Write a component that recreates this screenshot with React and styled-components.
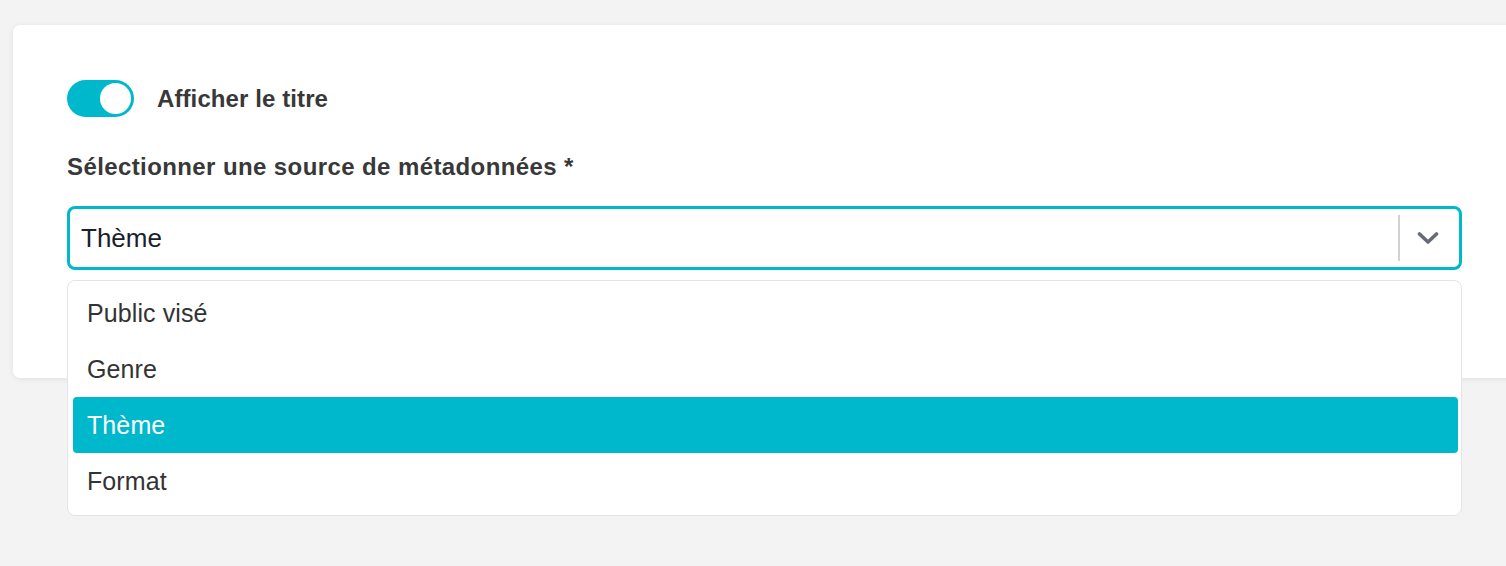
import { useState } from 'react';
import styled, { createGlobalStyle } from 'styled-components';

const GlobalStyle = createGlobalStyle`
  html, body {
    margin: 0;
    padding: 0;
    background-color: #f3f3f3;
    overflow: hidden;
  }

  body {
    font-family: 'Liberation Sans', Arial, Helvetica, sans-serif;
    color: #333;
  }
`;

const Page = styled.div`
  padding: 25px 0 0 13px;
  min-height: 100vh;
  box-sizing: border-box;
`;

const Card = styled.div`
  position: relative;
  width: 1503px;
  box-sizing: border-box;
  padding: 55px 54px 108px 54px;
  background-color: #fff;
  border-radius: 7px;
  box-shadow: 0 1px 6px rgba(0, 0, 0, 0.08);
`;

const ToggleRow = styled.label`
  display: flex;
  align-items: center;
  gap: 23px;
  cursor: pointer;
`;

const Track = styled.span`
  position: relative;
  display: inline-block;
  width: 67px;
  height: 37px;
  border-radius: 19px;
  background-color: ${({ $on }) => ($on ? '#00b8cc' : '#ccc')};
  transition: background-color 0.2s ease;
`;

const Knob = styled.span`
  position: absolute;
  top: 3px;
  left: ${({ $on }) => ($on ? '33px' : '3px')};
  width: 31px;
  height: 31px;
  border-radius: 50%;
  background-color: #fff;
  transition: left 0.2s ease;
`;

const ToggleText = styled.span`
  font-size: 24px;
  font-weight: 700;
  letter-spacing: 0.1px;
  color: #383838;
`;

const FieldLabel = styled.div`
  margin-top: 35px;
  font-size: 24px;
  line-height: 29px;
  font-weight: 700;
  letter-spacing: 0.4px;
  color: #383838;
`;

const SelectWrap = styled.div`
  position: relative;
  margin-top: 25px;
`;

const Control = styled.div`
  display: flex;
  align-items: center;
  height: 64px;
  box-sizing: border-box;
  border: 3px solid #00b8cc;
  border-radius: 8px;
  background-color: #fff;
  cursor: pointer;
`;

const Value = styled.div`
  flex: 1;
  padding-left: 11px;
  font-size: 26px;
  color: #1b1e2b;
`;

const Separator = styled.span`
  align-self: stretch;
  width: 2px;
  margin: 6px 0;
  background-color: #d1d1d6;
`;

const Indicator = styled.div`
  display: flex;
  align-items: center;
  justify-content: center;
  width: 59px;
  padding-right: 4px;
  box-sizing: border-box;
  color: #666b78;
`;

const Menu = styled.ul`
  position: absolute;
  top: calc(100% + 10px);
  left: 0;
  right: 0;
  margin: 0;
  padding: 4px 3px 6px 5px;
  list-style: none;
  background-color: #fff;
  border: 1px solid #e4e4e4;
  border-radius: 8px;
  z-index: 2;
`;

const Option = styled.li`
  height: 56px;
  line-height: 56px;
  padding: 0 14px;
  border-radius: 4px;
  font-size: 25px;
  letter-spacing: 0.1px;
  color: ${({ $selected }) => ($selected ? '#fff' : '#333')};
  background-color: ${({ $selected }) => ($selected ? '#00b8cc' : 'transparent')};
  cursor: pointer;
`;

const options = ['Public visé', 'Genre', 'Thème', 'Format'];

function Chevron() {
  return (
    <svg width="22" height="14" viewBox="0 0 22 14" fill="none">
      <polyline
        points="2.5,3 11,11 19.5,3"
        stroke="currentColor"
        strokeWidth="3.6"
        strokeLinecap="round"
        strokeLinejoin="round"
      />
    </svg>
  );
}

function App() {
  const [showTitle, setShowTitle] = useState(true);
  const [selected, setSelected] = useState('Thème');

  return (
    <>
      <GlobalStyle />
      <Page>
        <Card>
          <ToggleRow onClick={() => setShowTitle(!showTitle)}>
            <Track $on={showTitle}>
              <Knob $on={showTitle} />
            </Track>
            <ToggleText>Afficher le titre</ToggleText>
          </ToggleRow>
          <FieldLabel>Sélectionner une source de métadonnées *</FieldLabel>
          <SelectWrap>
            <Control>
              <Value>{selected}</Value>
              <Separator />
              <Indicator>
                <Chevron />
              </Indicator>
            </Control>
            <Menu>
              {options.map(option => (
                <Option
                  key={option}
                  $selected={option === selected}
                  onClick={() => setSelected(option)}
                >
                  {option}
                </Option>
              ))}
            </Menu>
          </SelectWrap>
        </Card>
      </Page>
    </>
  );
}

export default App;
